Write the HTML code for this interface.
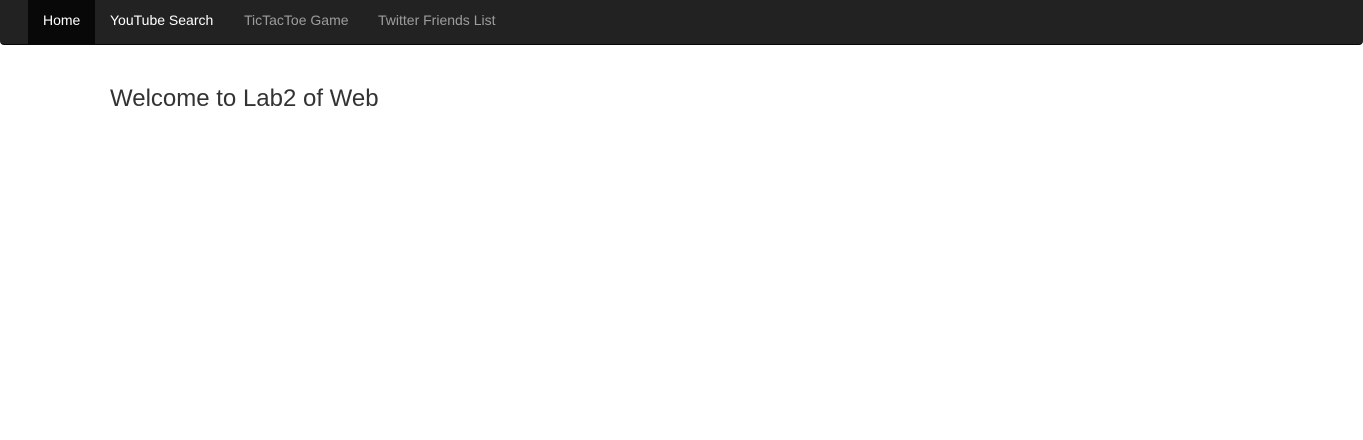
<!DOCTYPE html>
<html><head><style>
body{margin:0;background:#fff;font-family:"Liberation Sans",Arial,sans-serif;width:1363px;height:440px;overflow:hidden}
.nav{position:absolute;left:0;top:0;width:1363px;height:45px;background:#222;border-bottom:1px solid #080808;border-radius:0 0 4px 4px;box-sizing:border-box}
.nav a{position:absolute;top:0;height:44px;line-height:41px;font-size:14px;color:#9d9d9d;text-decoration:none;padding:0 15px}
h3{position:absolute;left:110px;top:86px;margin:0;font-size:24px;font-weight:400;color:#333;line-height:26px}
</style></head><body>
<div class="nav">
<a style="left:28px;background:#080808;color:#fff;width:37px">Home</a>
<a style="left:95px;color:#fff">YouTube Search</a>
<a style="left:229px">TicTacToe Game</a>
<a style="left:363px">Twitter Friends List</a>
</div>
<h3>Welcome to Lab2 of Web</h3>
</body></html>
